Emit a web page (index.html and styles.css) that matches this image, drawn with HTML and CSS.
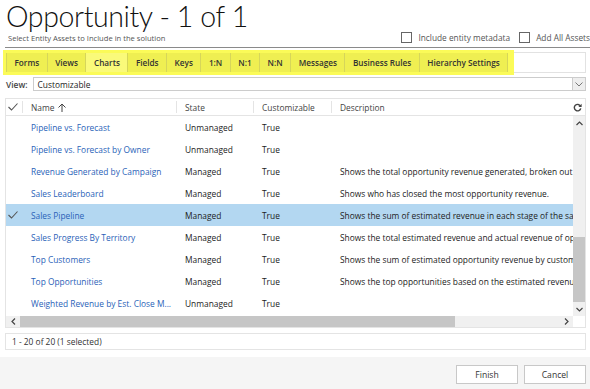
FILE: index.html
```html
<!DOCTYPE html>
<html lang="en">
<head>
  <meta charset="UTF-8">
  <title>Opportunity - 1 of 1</title>
  <link rel="stylesheet" href="styles.css">
</head>
<body>
  <div class="dialog">
    <header class="head">
      <div class="titles">
        <h1>Opportunity - 1 of 1</h1>
        <p class="sub">Select Entity Assets to Include in the solution</p>
      </div>
      <div class="opts">
        <label><span class="cb"></span>Include entity metadata</label>
        <label><span class="cb"></span>Add All Assets</label>
      </div>
    </header>

    <div class="tabstrip">
      <div class="highlight">
        <span class="tab">Forms</span>
        <span class="tab">Views</span>
        <span class="tab active">Charts</span>
        <span class="tab">Fields</span>
        <span class="tab">Keys</span>
        <span class="tab">1:N</span>
        <span class="tab">N:1</span>
        <span class="tab">N:N</span>
        <span class="tab">Messages</span>
        <span class="tab">Business Rules</span>
        <span class="tab">Hierarchy Settings</span>
      </div>
    </div>

    <div class="viewrow">
      <span class="viewlabel">View:</span>
      <div class="select">
        <span>Customizable</span>
        <span class="drop"><svg width="8" height="5" viewBox="0 0 8 5"><path d="M0.5 0.5 L4 4 L7.5 0.5" fill="none" stroke="#777" stroke-width="1"/></svg></span>
      </div>
    </div>

    <div class="grid">
      <div class="ghead">
        <div class="c chk"><svg width="10" height="8" viewBox="0 0 10 8"><path d="M0.5 4 L3.5 7 L9.5 0.5" fill="none" stroke="#555" stroke-width="1.1"/></svg></div>
        <div class="c name">Name <svg width="8" height="9" viewBox="0 0 8 9"><path d="M4 9 V1 M0.5 4.5 L4 1 L7.5 4.5" fill="none" stroke="#444" stroke-width="1"/></svg></div>
        <div class="c state">State</div>
        <div class="c cust">Customizable</div>
        <div class="c desc">Description</div>
        <div class="c refresh"><svg width="9" height="9" viewBox="0 0 10 10"><path d="M8.3 3.5 A3.6 3.6 0 1 0 8.6 6" fill="none" stroke="#444" stroke-width="1.6"/><path d="M9.6 0.8 V4.4 H6 Z" fill="#444"/></svg></div>
      </div>
      <div class="gbody">
        <div class="rows">
          <div class="row"><div class="c chk"></div><div class="c name">Pipeline vs. Forecast</div><div class="c state">Unmanaged</div><div class="c cust">True</div><div class="c desc"></div></div>
          <div class="row"><div class="c chk"></div><div class="c name">Pipeline vs. Forecast by Owner</div><div class="c state">Unmanaged</div><div class="c cust">True</div><div class="c desc"></div></div>
          <div class="row"><div class="c chk"></div><div class="c name">Revenue Generated by Campaign</div><div class="c state">Managed</div><div class="c cust">True</div><div class="c desc">Shows the total opportunity revenue generated, broken out by campaign.</div></div>
          <div class="row"><div class="c chk"></div><div class="c name">Sales Leaderboard</div><div class="c state">Managed</div><div class="c cust">True</div><div class="c desc">Shows who has closed the most opportunity revenue.</div></div>
          <div class="row selected"><div class="c chk"><svg width="10" height="8" viewBox="0 0 10 8"><path d="M0.5 4 L3.5 7 L9.5 0.5" fill="none" stroke="#555" stroke-width="1.1"/></svg></div><div class="c name">Sales Pipeline</div><div class="c state">Managed</div><div class="c cust">True</div><div class="c desc">Shows the sum of estimated revenue in each stage of the sales pipeline.</div></div>
          <div class="row"><div class="c chk"></div><div class="c name">Sales Progress By Territory</div><div class="c state">Managed</div><div class="c cust">True</div><div class="c desc">Shows the total estimated revenue and actual revenue of opportunities.</div></div>
          <div class="row"><div class="c chk"></div><div class="c name">Top Customers</div><div class="c state">Managed</div><div class="c cust">True</div><div class="c desc">Shows the sum of estimated opportunity revenue by customer.</div></div>
          <div class="row"><div class="c chk"></div><div class="c name">Top Opportunities</div><div class="c state">Managed</div><div class="c cust">True</div><div class="c desc">Shows the top opportunities based on the estimated revenue.</div></div>
          <div class="row"><div class="c chk"></div><div class="c name">Weighted Revenue by Est. Close M...</div><div class="c state">Unmanaged</div><div class="c cust">True</div><div class="c desc"></div></div>
        </div>
        <div class="vscroll">
          <span class="arr"><svg width="7" height="5" viewBox="0 0 7 5"><path d="M0.5 4 L3.5 1 L6.5 4" fill="none" stroke="#444" stroke-width="1.2"/></svg></span>
          <span class="vtrack"><span class="vthumb"></span></span>
          <span class="arr"><svg width="7" height="5" viewBox="0 0 7 5"><path d="M0.5 1 L3.5 4 L6.5 1" fill="none" stroke="#444" stroke-width="1.2"/></svg></span>
        </div>
      </div>
      <div class="hscroll">
        <span class="harr"><svg width="5" height="7" viewBox="0 0 5 7"><path d="M4 0.5 L1 3.5 L4 6.5" fill="none" stroke="#444" stroke-width="1.2"/></svg></span>
        <span class="hthumb"></span>
        <span class="htrack"></span>
        <span class="harr"><svg width="5" height="7" viewBox="0 0 5 7"><path d="M1 0.5 L4 3.5 L1 6.5" fill="none" stroke="#444" stroke-width="1.2"/></svg></span>
        <span class="corner"></span>
      </div>
    </div>

    <div class="status">1 - 20 of 20 (1 selected)</div>

    <footer class="foot">
      <button class="btn">Finish</button>
      <button class="btn">Cancel</button>
    </footer>
  </div>
</body>
</html>
```

FILE: styles.css
```css
body {
  margin: 0;
  font-family: "Open Sans", "DejaVu Sans", sans-serif;
  font-size: 8.4px;
  color: #222;
  background: #fff;
}
.dialog {
  width: 590px;
  height: 389px;
  display: flex;
  flex-direction: column;
  overflow: hidden;
}
.head {
  display: flex;
  justify-content: space-between;
  align-items: flex-end;
  margin-left: 5px;
  padding: 0 0 4px 1px;
  border-bottom: 1px solid #8a8a8a;
}
h1 {
  margin: 0;
  font-family: Lato, "Open Sans", sans-serif;
  font-size: 28.5px;
  font-weight: 300;
  letter-spacing: -0.4px;
  line-height: 33px;
  color: #111;
}
.sub {
  margin: 0 0 0 2px;
  font-size: 7.6px;
  color: #555;
  line-height: 10px;
}
.opts {
  display: flex;
  gap: 9px;
  color: #555;
  font-size: 8.3px;
  line-height: 10px;
}
.opts label {
  display: flex;
  align-items: center;
  gap: 6px;
}
.cb {
  width: 9px;
  height: 9px;
  border: 1px solid #666;
  background: #fff;
}
.tabstrip {
  margin: 4px 4px 0 5px;
  height: 19px;
  border: 1px solid #e2e2e2;
  border-left: none;
  display: flex;
  align-items: center;
}
.highlight {
  display: flex;
  background: #fbfb58;
  margin: -3px 0 -3px -2px;
  padding: 3px 6px 3px 3px;
  height: 19px;
}
.tab {
  display: flex;
  align-items: center;
  padding: 0 7.5px;
  font-weight: 600;
  font-size: 8.2px;
  color: #333;
  background: #efef52;
  border-right: 1px solid #d6d65a;
}
.tab:first-child {
  border-left: 1px solid #d6d65a;
}
.tab.active {
  background: #fafa7a;
}
.viewrow {
  display: flex;
  align-items: center;
  margin: 4px 4px 0 6px;
  gap: 5px;
}
.viewlabel {
  font-weight: 600;
  color: #444;
}
.select {
  flex: 1;
  height: 12px;
  border: 1px solid #ccc;
  display: flex;
  align-items: center;
  justify-content: space-between;
  padding-left: 4px;
}
.drop {
  width: 12px;
  height: 12px;
  display: flex;
  align-items: center;
  justify-content: center;
  background: #eee;
  border-left: 1px solid #ccc;
}
.grid {
  margin: 7px 4px 0 5px;
  border: 1px solid #e4e4e4;
  display: flex;
  flex-direction: column;
}
.ghead {
  display: flex;
  height: 16px;
  align-items: center;
  border-bottom: 1px solid #e4e4e4;
  color: #444;
}
.c {
  flex: none;
  padding-left: 8px;
  box-sizing: border-box;
  white-space: nowrap;
  overflow: hidden;
  display: flex;
  align-items: center;
  height: 100%;
}
.chk { width: 17px; padding-left: 2px; }
.name { width: 154px; gap: 4px; }
.state { width: 77px; }
.cust { width: 78px; }
.desc { flex: 1; width: 0; }
.refresh { width: 12px; padding-left: 0; }
.ghead .chk,
.ghead .name,
.ghead .state,
.ghead .cust {
  border-right: 1px solid #e4e4e4;
  height: 12px;
}
.gbody {
  display: flex;
  height: 200px;
}
.rows {
  flex: 1;
  width: 0;
}
.row {
  display: flex;
  height: 22px;
  align-items: center;
}
.row .name { color: #2a62b8; }
.row.selected { background: #b3d7f1; }
.vscroll {
  width: 12px;
  background: #f0f0f0;
  display: flex;
  flex-direction: column;
}
.arr {
  height: 14px;
  display: flex;
  align-items: center;
  justify-content: center;
}
.vtrack {
  flex: 1;
  display: flex;
  flex-direction: column;
  justify-content: flex-end;
}
.vthumb {
  height: 65px;
  background: #c6c6c6;
}
.hscroll {
  display: flex;
  height: 11px;
  background: #f0f0f0;
}
.harr {
  width: 14px;
  display: flex;
  align-items: center;
  justify-content: center;
}
.hthumb {
  width: 435px;
  background: #c6c6c6;
}
.htrack { flex: 1; }
.corner { width: 12px; background: #fff; }
.status {
  margin: 5px 4px 0 5px;
  height: 15px;
  border: 1px solid #e4e4e4;
  display: flex;
  align-items: center;
  padding-left: 6px;
  color: #333;
}
.foot {
  margin-top: 7px;
  flex: 1;
  background: #f5f5f5;
  display: flex;
  justify-content: flex-end;
  align-items: flex-start;
  gap: 6px;
  padding: 8px 4px 0 0;
}
.btn {
  width: 62px;
  height: 19px;
  border: 1px solid #c8c8c8;
  background: #fff;
  font-family: inherit;
  font-size: 8.6px;
  color: #333;
}
```
